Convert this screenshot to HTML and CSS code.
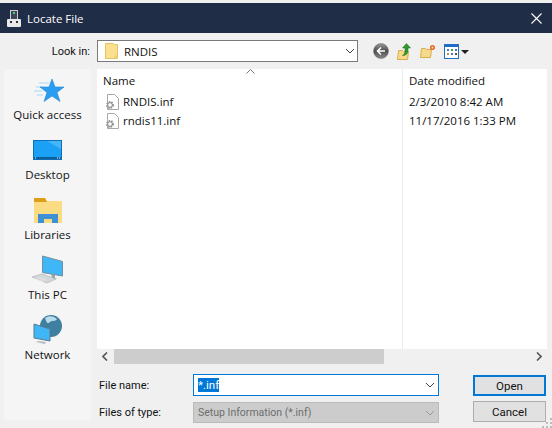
FILE: index.html
```html
<!DOCTYPE html>
<html lang="en">

<head>
	<meta charset="UTF-8">
	<title>Locate File</title>
	<link rel="stylesheet" href="styles.css">
</head>

<body>
	<div class="dialog">
		<header class="titlebar">
			<svg class="title-icon" width="14" height="17" viewBox="0 0 14 17">
				<rect x="3.500" y=".5" width="7" height="9" fill="#3c4656" stroke="#c9ccd1" />
				<rect x="6" y="2" width="2" height="2" fill="#4fd060" />
				<rect x="0" y="9" width="14" height="8" rx="1" fill="#e9e9e9" />
				<rect x="3" y="11" width="2" height="2" fill="#333" />
				<rect x="9" y="11" width="2" height="2" fill="#333" />
			</svg>
			<span class="title-text">Locate File</span>
			<svg class="close-icon" width="11" height="11" viewBox="0 0 11 11">
				<path d="M.5.5l10 10M10.500.5l-10 10" stroke="#fff" stroke-width="1.100" fill="none" />
			</svg>
		</header>

		<div class="lookin">
			<label class="lookin-label">Look in:</label>
			<div class="combo">
				<svg width="13" height="16" viewBox="0 0 13 16">
					<path d="M.5.500h8l1 1h3v14H.5z" fill="#fbe08f" stroke="#e5c365" />
					<path d="M9.500 12.500h3v3h-3z" fill="#f3cf6d" />
				</svg>
				<span class="combo-text">RNDIS</span>
				<svg class="chevron" width="10" height="6" viewBox="0 0 10 6">
					<path d="M1 1l4 4 4-4" fill="none" stroke="#444" />
				</svg>
			</div>
			<div class="tools">
				<svg width="16" height="16" viewBox="0 0 16 16">
					<defs>
						<linearGradient id="back" x1="0" y1="0" x2="0" y2="1">
							<stop offset="0" stop-color="#9a9a9a" />
							<stop offset=".5" stop-color="#4c4c4c" />
							<stop offset="1" stop-color="#8a8a8a" />
						</linearGradient>
					</defs>
					<circle cx="8" cy="8" r="7.500" fill="url(#back)" stroke="#666" stroke-width=".5" />
					<path d="M8 4.500L4.500 8 8 11.500M5 8h7" fill="none" stroke="#fff" stroke-width="1.600" />
				</svg>
				<svg width="15" height="17" viewBox="0 0 15 17">
					<path d="M.5 16.500l1-9h4l1 1h5l-1 8z" fill="#f6d98a" stroke="#d8ad4a" />
					<path d="M9.500 .5L5.500 5H8v3c0 2-1 3.500-2.500 4.500 3.500 0 5.500-2 5.500-5V5h2.500z" fill="#2f9a2c" stroke="#1d6f1b" stroke-width=".5" />
				</svg>
				<svg width="16" height="14" viewBox="0 0 16 14">
					<path d="M.5 13.500l1-9h4l1 1h5l-1 8z" fill="#f6d98a" stroke="#d8ad4a" />
					<circle cx="12.500" cy="3.500" r="2.500" fill="#e8632c" />
					<circle cx="12.500" cy="3.500" r="1" fill="#ffe9a0" />
				</svg>
				<svg width="25" height="15" viewBox="0 0 25 15">
					<rect x=".5" y=".5" width="14" height="14" fill="#fff" stroke="#1f6fc4" />
					<rect x="1" y="1" width="13" height="2" fill="#1f6fc4" />
					<path d="M3 5h2v2H3z" fill="#3a78c8" />
					<path d="M7 5h2v2H7z" fill="#4aa04a" />
					<path d="M11 5h2v2h-2z" fill="#3a78c8" />
					<path d="M3 9h2v2H3z" fill="#e08a30" />
					<path d="M7 9h2v2H7z" fill="#3a78c8" />
					<path d="M11 9h2v2h-2z" fill="#555" />
					<path d="M17 6h8l-4 4z" fill="#222" />
				</svg>
			</div>
		</div>

		<div class="body">
			<nav class="places">
				<div class="place">
					<svg width="32" height="30" viewBox="0 0 32 30">
						<path d="M7 8h10M4 12h6M2 16h8M5 20h6" stroke="#a9d8f7" stroke-width="1.200" />
						<path d="M20 4l3 8h9l-7 5.500 3 9-8-5.500-8 5.500 3-9-7-5.500h9z" fill="#2a9df0" stroke="#1b86d8" stroke-width=".6" />
					</svg>
					<span>Quick access</span>
				</div>
				<div class="place">
					<svg width="30" height="30" viewBox="0 0 30 30">
						<rect x=".5" y="5.500" width="28" height="19" fill="#1aa0f5" stroke="#0d6fb8" />
						<path d="M14 6h14v8z" fill="#45b5f8" />
						<rect x="1" y="22" width="27" height="2" fill="#0b5f9f" />
						<path d="M2 23h1M24 23h1M26 23h1" stroke="#fff" />
					</svg>
					<span>Desktop</span>
				</div>
				<div class="place">
					<svg width="30" height="30" viewBox="0 0 30 30">
						<path d="M1 3h11l2 3h15v22H1z" fill="#fbdc83" />
						<path d="M1 3h11l2 4H1z" fill="#dc9f16" />
						<path d="M5 28v-9h20v9h-6v-4h-8v4z" fill="#3f8fd6" />
					</svg>
					<span>Libraries</span>
				</div>
				<div class="place">
					<svg width="32" height="30" viewBox="0 0 32 30">
						<path d="M10.500 1l20 5.500V21l-20-3.500z" fill="#3fb6f5" stroke="#6f8fa5" />
						<path d="M19 19l4 1v3l3 1-6-.5z" fill="#9aa5ad" />
						<path d="M0 22l10-3 14 5-9 4z" fill="#d5d8da" stroke="#a8adb1" stroke-width=".6" />
						<path d="M6 22.500l8 2.500M4 24l8 2.500" stroke="#f4f4f4" stroke-dasharray="1 1" />
					</svg>
					<span>This PC</span>
				</div>
				<div class="place">
					<svg width="30" height="30" viewBox="0 0 30 30">
						<circle cx="18" cy="11" r="11" fill="#3f7f9f" />
						<path d="M12 3c4-3 9-2 12 1-2 3-5 1-7 3s-3 2-5-4z" fill="#b8dceb" />
						<path d="M1 9l16 5v12L1 23z" fill="#3fb6f5" stroke="#5b7a8f" />
						<path d="M5 26l8 1-1 2-9-2z" fill="#b5bbc0" />
					</svg>
					<span>Network</span>
				</div>
			</nav>

			<div class="right">
				<section class="files">
					<div class="col col-name">
						<svg class="sort" width="9" height="5" viewBox="0 0 9 5">
							<path d="M.5 4.500l4-4 4 4" fill="none" stroke="#777" />
						</svg>
						<div class="col-head">Name</div>
						<div class="row">
							<svg width="14" height="16" viewBox="0 0 14 16">
								<path d="M2.500.5h7l4 4v11h-11z" fill="#fff" stroke="#a8a8a8" />
								<circle cx="5" cy="11" r="3" fill="#fff" stroke="#999" stroke-width="2" stroke-dasharray="1.500 1" />
								<circle cx="5" cy="11" r="2.400" fill="none" stroke="#8c8c8c" />
							</svg>
							RNDIS.inf
						</div>
						<div class="row">
							<svg width="14" height="16" viewBox="0 0 14 16">
								<path d="M2.500.5h7l4 4v11h-11z" fill="#fff" stroke="#a8a8a8" />
								<circle cx="5" cy="11" r="3" fill="#fff" stroke="#999" stroke-width="2" stroke-dasharray="1.500 1" />
								<circle cx="5" cy="11" r="2.400" fill="none" stroke="#8c8c8c" />
							</svg>
							rndis11.inf
						</div>
					</div>
					<div class="col col-date">
						<div class="col-head">Date modified</div>
						<div class="row">2/3/2010 8:42 AM</div>
						<div class="row">11/17/2016 1:33 PM</div>
					</div>
				</section>

				<div class="hscroll">
					<svg class="arrow" width="6" height="9" viewBox="0 0 6 9">
						<path d="M5 .5l-4 4 4 4" fill="none" stroke="#555" stroke-width="1.600" />
					</svg>
					<div class="thumb"></div>
					<svg class="arrow arrow-right" width="6" height="9" viewBox="0 0 6 9">
						<path d="M1 .5l4 4-4 4" fill="none" stroke="#555" stroke-width="1.600" />
					</svg>
				</div>

				<div class="form">
					<label class="form-label">File name:</label>
					<div class="field field-active">
						<span class="selected">*.inf</span>
						<svg class="chevron" width="10" height="6" viewBox="0 0 10 6">
							<path d="M1 1l4 4 4-4" fill="none" stroke="#444" />
						</svg>
					</div>
					<button class="btn btn-default">Open</button>
					<label class="form-label">Files of type:</label>
					<div class="field field-disabled">
						<span>Setup Information (*.inf)</span>
						<svg class="chevron" width="10" height="6" viewBox="0 0 10 6">
							<path d="M1 1l4 4 4-4" fill="none" stroke="#999" />
						</svg>
					</div>
					<button class="btn btn-cancel">Cancel</button>
				</div>
			</div>
		</div>
		<svg class="grip" width="10" height="10" viewBox="0 0 10 10">
			<path d="M8 0h2v2H8zM4 4h2v2H4zM8 4h2v2H8zM0 8h2v2H0zM4 8h2v2H4zM8 8h2v2H8z" fill="#bbb" />
		</svg>
	</div>
</body>

</html>
```

FILE: styles.css
```css
html,
body {
	margin: 0;
	width: 552px;
	height: 428px;
	overflow: hidden;
	font-family: 'Open Sans', sans-serif;
	font-size: 11.5px;
	color: #111;
}

.dialog {
	position: relative;
	display: flex;
	flex-direction: column;
	height: 428px;
	padding-top: 3px;
	box-sizing: border-box;
	background: #f0f0f0;
}

.titlebar {
	display: flex;
	align-items: center;
	height: 30px;
	flex: none;
	padding: 0 8px 0 7px;
	background: #1f2d46;
	color: #fff;
}

.title-icon {
	margin-right: 6px;
}

.close-icon {
	margin-left: auto;
	margin-right: 2px;
}

.lookin {
	display: flex;
	align-items: center;
	height: 36px;
	flex: none;
}

.lookin-label {
	width: 90px;
	margin-right: 7px;
	text-align: right;
	font-family: Roboto, sans-serif;
	font-size: 11px;
}

.combo {
	display: flex;
	align-items: center;
	width: 261px;
	height: 22px;
	box-sizing: border-box;
	padding: 0 2px 0 7px;
	background: #fff;
	border: 1px solid #7a7a7a;
}

.combo-text {
	margin-left: 6px;
}

.chevron {
	margin-left: auto;
}

.tools {
	display: flex;
	align-items: center;
	gap: 8px;
	margin-left: 15px;
}

.body {
	display: flex;
	flex: 1;
	gap: 6px;
	padding: 0 5px 8px 4px;
	min-height: 0;
}

.places {
	width: 87px;
	flex: none;
	background: #f5f5f5;
	padding-top: 3px;
	box-sizing: border-box;
}

.place {
	display: flex;
	flex-direction: column;
	align-items: center;
	height: 60px;
	padding-top: 3px;
	box-sizing: border-box;
}

.place span {
	margin-top: 2px;
}

.right {
	display: flex;
	flex-direction: column;
	flex: 1;
	min-width: 0;
}

.files {
	display: grid;
	grid-template-columns: 305px 1fr;
	height: 280px;
	flex: none;
	background: #fff;
}

.col {
	position: relative;
}

.col-name {
	padding-left: 6px;
}

.col-date {
	border-left: 1px solid #e5edf3;
	padding-left: 6px;
}

.sort {
	position: absolute;
	top: 0;
	left: 149px;
}

.col-head {
	height: 23px;
	line-height: 24px;
}

.row {
	display: flex;
	align-items: center;
	gap: 4px;
	height: 19px;
}

.col-name .row svg {
	margin-left: 2px;
}

.hscroll {
	display: flex;
	align-items: center;
	height: 15px;
	flex: none;
	padding-left: 5px;
}

.thumb {
	width: 270px;
	height: 15px;
	margin-left: 6px;
	background: #cdcdcd;
}

.arrow-right {
	margin-left: auto;
	margin-right: 5px;
}

.form {
	display: grid;
	grid-template-columns: 94px 246px 107px;
	grid-template-rows: 22px 21px;
	row-gap: 6px;
	align-items: center;
	padding: 10px 0 0 2px;
	font-family: Roboto, sans-serif;
}

.form-label {
	font-size: 11px;
}

.field {
	display: flex;
	align-items: center;
	height: 100%;
	box-sizing: border-box;
	padding: 0 3px 0 4px;
}

.field-active {
	background: #fff;
	border: 1px solid #0078d7;
}

.field-disabled {
	background: #ccc;
	border: 1px solid #bbb;
	color: #6d6d6d;
	font-size: 10.5px;
}

.selected {
	background: #0078d7;
	color: #fff;
}

.btn {
	justify-self: end;
	align-self: end;
	width: 73px;
	height: 21px;
	padding: 0;
	font: inherit;
	color: #111;
	background: #e1e1e1;
	border: 1px solid #adadad;
}

.btn-default {
	border: 2px solid #0078d7;
}

.btn-cancel {
	margin-bottom: 1px;
}

.grip {
	position: absolute;
	right: 0;
	bottom: 0;
}
```
